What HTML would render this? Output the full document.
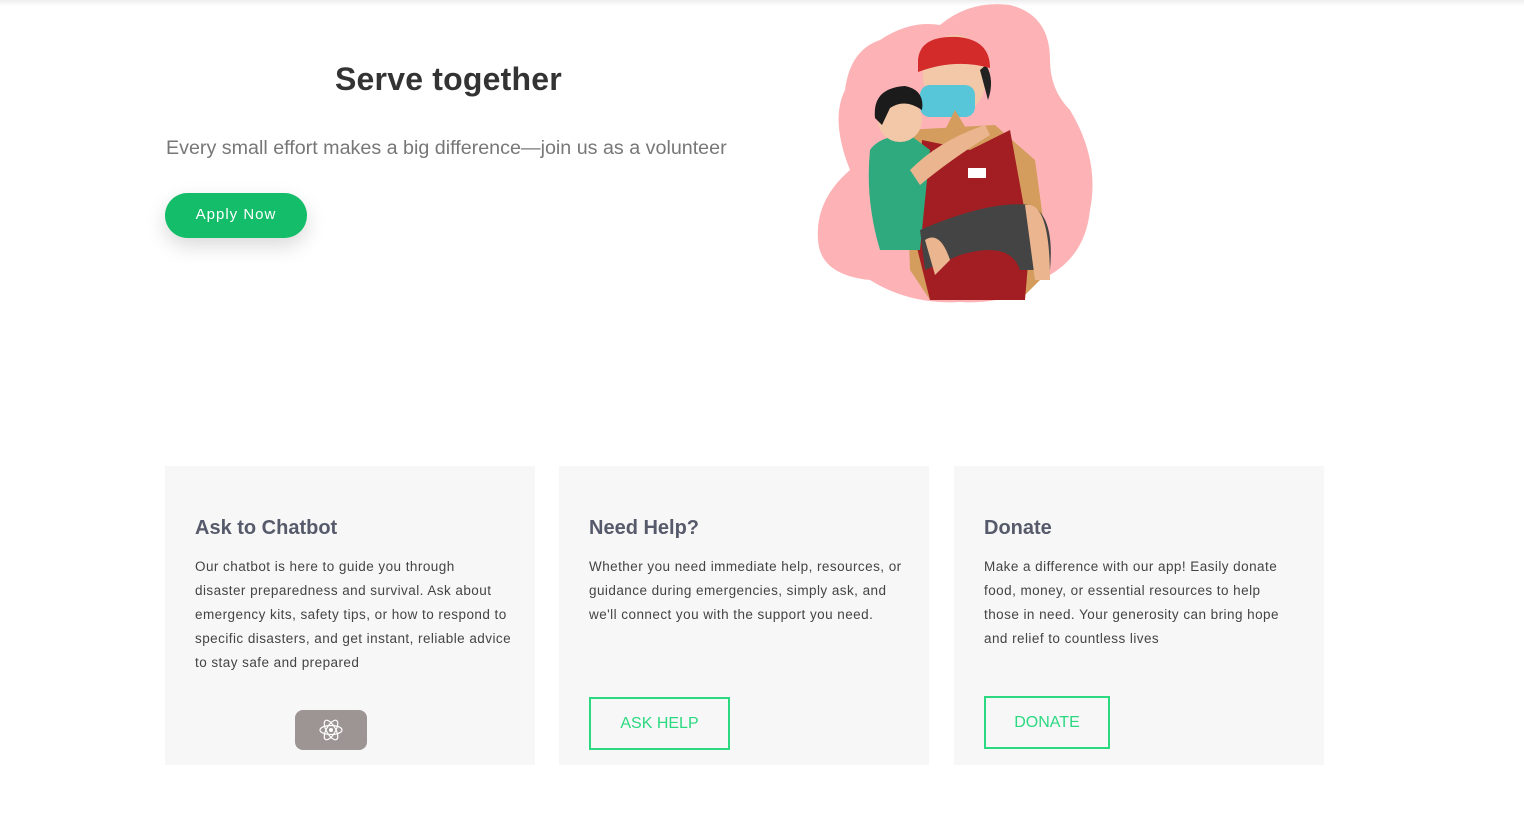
<!DOCTYPE html>
<html><head><meta charset="utf-8">
<style>
*{margin:0;padding:0;box-sizing:border-box}
body{width:1524px;height:834px;background:#fff;font-family:"Liberation Sans",sans-serif;position:relative;overflow:hidden}
.topbar{position:absolute;left:0;top:0;width:1524px;height:6px;background:linear-gradient(#eee,#fff)}
h1{position:absolute;left:335px;top:61px;font-size:32px;font-weight:bold;color:#333;letter-spacing:0.2px}
.sub{position:absolute;left:166px;top:137px;font-size:19.7px;color:#777}
.apply{position:absolute;left:165px;top:193px;width:142px;height:45px;border-radius:23px;background:#13bd69;color:#fff;font-size:15px;letter-spacing:1px;text-align:center;line-height:43px;box-shadow:0 8px 20px rgba(0,0,0,.15)}
.card{position:absolute;top:466px;width:370px;height:299px;background:#f7f7f7}
.card h3{position:absolute;left:30px;top:51px;font-size:20px;color:#565a6a;font-weight:bold}
.card p{position:absolute;left:30px;top:89px;white-space:nowrap;font-size:13.5px;line-height:24px;color:#444;letter-spacing:0.45px}
.btn{position:absolute;border:2px solid #2bd980;color:#2bd980;font-size:16px;text-align:center}
</style></head><body>
<div class="topbar"></div>
<h1>Serve together</h1>
<div class="sub">Every small effort makes a big difference—join us as a volunteer</div>
<div class="apply">Apply Now</div>

<svg style="position:absolute;left:810px;top:0" width="300" height="310" viewBox="0 0 300 310">
<path d="M70 40 Q100 20 130 25 Q160 0 200 5 Q240 15 240 60 Q240 90 260 110 Q290 160 280 210 Q275 260 230 280 Q200 305 150 302 Q100 305 60 280 Q10 275 8 240 Q5 200 40 170 Q20 120 35 90 Q40 50 70 40Z" fill="#fdb3b6"/>
<path d="M95 130 L185 125 L225 160 L240 270 L210 300 L120 300 L100 270Z" fill="#d49d5e"/>
<path d="M112 140 L160 150 L200 130 L220 240 L215 300 L120 300 L105 240Z" fill="#a31e22"/>
<ellipse cx="145" cy="75" rx="32" ry="40" fill="#f3c8a8"/>
<path d="M176 65 Q185 80 178 100 L170 70Z" fill="#222"/>
<path d="M108 60 Q110 35 148 37 Q180 40 180 68 Q145 58 108 72Z" fill="#d32a2a"/>
<rect x="110" y="85" width="55" height="32" rx="10" fill="#56c6d8"/>
<path d="M160 135 L145 110 L130 140Z" fill="#d49d5e"/>
<rect x="158" y="168" width="18" height="10" fill="#fff"/>
<path d="M60 150 Q70 135 100 135 L120 150 L110 250 L70 250 Q55 200 60 150Z" fill="#2faa7f"/>
<circle cx="90" cy="120" r="22" fill="#f3c8a8"/>
<path d="M65 118 Q62 88 95 86 Q115 90 112 110 Q95 98 80 108 L72 125Z" fill="#1b1b1b"/>
<path d="M100 170 Q130 140 175 125 L180 135 Q140 160 110 185Z" fill="#eab58f"/>
<path d="M110 230 Q180 200 220 205 Q245 215 240 270 L210 270 Q200 240 150 255 L115 270Z" fill="#444"/>
<path d="M215 205 Q240 200 240 280 L225 280Z" fill="#eab58f"/>
<path d="M115 240 Q130 230 140 260 L125 275Z" fill="#eab58f"/>
</svg>

<div class="card" style="left:165px"><h3>Ask to Chatbot</h3>
<p>Our chatbot is here to guide you through<br>disaster preparedness and survival. Ask about<br>emergency kits, safety tips, or how to respond to<br>specific disasters, and get instant, reliable advice<br>to stay safe and prepared</p>
<div style="position:absolute;left:130px;top:244px;width:72px;height:40px;border-radius:8px;background:#9d9594">
<svg width="72" height="40" viewBox="0 0 72 40"><g fill="none" stroke="#fff" stroke-width="1.2"><ellipse cx="36" cy="20" rx="11" ry="4.5"/><ellipse cx="36" cy="20" rx="11" ry="4.5" transform="rotate(60 36 20)"/><ellipse cx="36" cy="20" rx="11" ry="4.5" transform="rotate(-60 36 20)"/></g><circle cx="36" cy="20" r="2" fill="#fff"/></svg></div>
</div>
<div class="card" style="left:559px"><h3>Need Help?</h3>
<p>Whether you need immediate help, resources, or<br>guidance during emergencies, simply ask, and<br>we'll connect you with the support you need.</p>
<div class="btn" style="left:30px;top:231px;width:141px;height:53px;line-height:49px">ASK HELP</div>
</div>
<div class="card" style="left:954px"><h3>Donate</h3>
<p>Make a difference with our app! Easily donate<br>food, money, or essential resources to help<br>those in need. Your generosity can bring hope<br>and relief to countless lives</p>
<div class="btn" style="left:30px;top:230px;width:126px;height:53px;line-height:49px">DONATE</div>
</div>
</body></html>
